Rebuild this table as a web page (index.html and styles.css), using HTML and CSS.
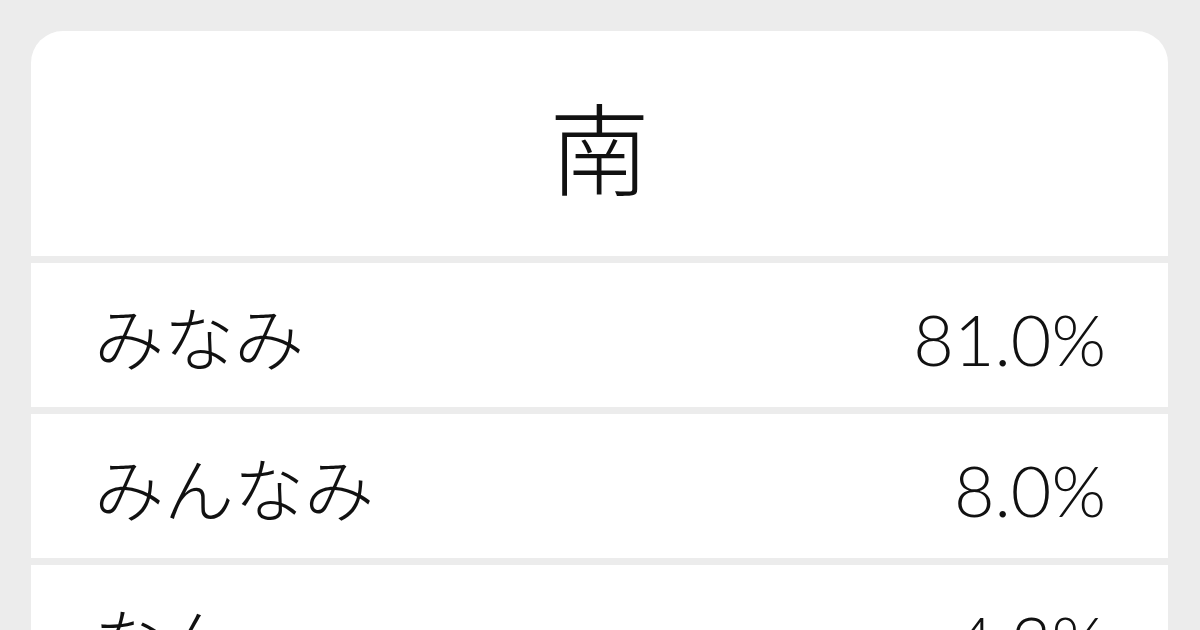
FILE: index.html
```html
<!DOCTYPE html>
<html lang="ja">
<head>
  <meta charset="UTF-8">
  <title>南 の読み方</title>
  <link rel="stylesheet" href="styles.css">
</head>
<body>
  <main class="card">
    <header class="kanji">南</header>
    <div class="reading">
      <span class="kana">みなみ</span>
      <span class="ratio">81.0%</span>
    </div>
    <div class="reading">
      <span class="kana">みんなみ</span>
      <span class="ratio">8.0%</span>
    </div>
    <div class="reading">
      <span class="kana">なん</span>
      <span class="ratio">4.3%</span>
    </div>
  </main>
</body>
</html>
```

FILE: styles.css
```css
html, body {
  margin: 0;
  padding: 0;
  height: 100%;
  overflow: hidden;
}
body {
  background: #ececec;
  font-family: Lato, "Noto Sans CJK JP", sans-serif;
  font-weight: 300;
  color: #111;
  padding: 31px 32px 0 31px;
  box-sizing: border-box;
}
.card {
  display: flex;
  flex-direction: column;
  gap: 7px;
  border-radius: 32px 32px 0 0;
  overflow: hidden;
}
.kanji {
  background: #fff;
  box-sizing: border-box;
  height: 225px;
  padding-top: 10px;
  flex-shrink: 0;
  display: flex;
  align-items: center;
  justify-content: center;
  font-size: 100px;
  line-height: 1;
}
.reading {
  background: #fff;
  box-sizing: border-box;
  height: 144px;
  flex-shrink: 0;
  display: flex;
  align-items: center;
  justify-content: space-between;
  padding: 7px 62px 0 63px;
  font-size: 70px;
  line-height: 1;
}
```
